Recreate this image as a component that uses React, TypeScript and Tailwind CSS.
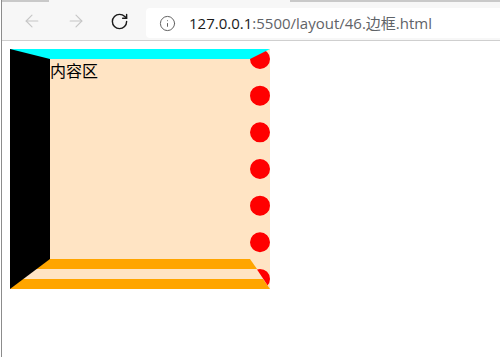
import React from "react";
import { ArrowLeft, ArrowRight, RotateCw, Info } from "lucide-react";

export default function App() {
  return (
    <div className="w-[500px] h-[357px] bg-white pl-px overflow-hidden">
      <div className="h-full border-l border-[#8c8c8c] flex flex-col">
        {/* toolbar */}
        <div className="h-[40px] bg-[#f7f7f7] flex flex-col shrink-0">
          <div className="h-[2px] flex">
            <div className="w-[47px] bg-[#c9c9c9]" />
            <div className="w-[241px]" />
            <div className="flex-1 bg-[#c9c9c9]" />
          </div>
          <div className="flex-1 flex items-center">
            <div className="w-[144px] flex items-center pl-[20px] gap-[24px]">
              <ArrowLeft size={20} strokeWidth={1.3} color="#c6c6c6" />
              <ArrowRight size={20} strokeWidth={1.3} color="#c6c6c6" />
              <RotateCw size={19} strokeWidth={1.8} color="#1a1a1a" />
            </div>
            <div className="flex-1 h-[30px] bg-white rounded-l-[4px] flex items-center pl-[13px] mt-[4px]">
              <Info size={17} strokeWidth={1.4} color="#606060" />
              <span
                className="ml-[13px] text-[15px] text-[#5f6368]"
                style={{ fontFamily: '"Open Sans", "Noto Sans CJK SC", sans-serif' }}
              >
                <span className="text-[#1a1a1a]">127.0.0.1</span>:5500/layout/46.边框.html
              </span>
            </div>
          </div>
        </div>
        <div className="h-px bg-[#cfcfcf] shrink-0" />
        {/* viewport */}
        <div className="flex-1 p-[8px]">
          <div
            className="box-content w-[200px] h-[200px] bg-[bisque] border-t-[10px] border-r-[20px] border-b-[30px] border-l-[40px] border-t-[#00ffff] border-r-[red] border-b-[orange] border-l-black [border-style:solid_dotted_double_solid] text-[16px] leading-[22px] text-black"
            style={{ fontFamily: '"Noto Sans CJK SC", sans-serif' }}
          >
            内容区
          </div>
        </div>
      </div>
    </div>
  );
}
